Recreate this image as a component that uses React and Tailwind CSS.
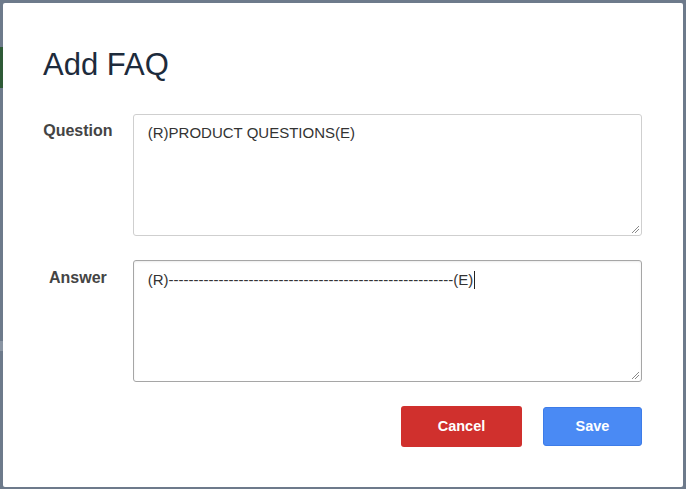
import React from "react";

function Grip() {
  return (
    <svg className="absolute right-[1px] bottom-[1px]" width="9" height="9" viewBox="0 0 9 9">
      <line x1="1" y1="8" x2="8" y2="1" stroke="#8a8a8a" strokeWidth="1" />
      <line x1="4" y1="8" x2="8" y2="4" stroke="#8a8a8a" strokeWidth="1" />
    </svg>
  );
}

export default function App() {
  const dashes = "-".repeat(57);
  return (
    <div
      className="w-[686px] h-[489px] bg-[#6d7a8b] relative overflow-hidden"
      style={{ fontFamily: '"Liberation Sans", Arial, sans-serif' }}
    >
      <div className="absolute left-0 top-[47px] w-[3px] h-[41px] bg-[#2e5a37]" />
      <div className="absolute left-0 top-[341px] w-[3px] h-[10px] bg-[#8a95a3]" />
      <div className="ml-[3px] mt-[3px] w-[680px] h-[484px] bg-white rounded-[2px] pl-[40px] pr-[41px] pt-[44px] flex flex-col">
        <h1 className="text-[31px] leading-[36px] text-[#1d2b3c] font-normal">Add FAQ</h1>
        <div className="mt-[31px] flex items-start">
          <div className="w-[70px] text-center text-[16px] font-bold text-[#444] pt-[8px] leading-[18px]">Question</div>
          <div className="ml-[20px] relative w-[511px] h-[122px] border border-[#cfcfcf] rounded-[3px] pl-[14px] pt-[8px] text-[15px] leading-[20px] text-[#333]">
            (R)PRODUCT QUESTIONS(E)
            <Grip />
          </div>
        </div>
        <div className="mt-[24px] flex items-start">
          <div className="w-[70px] text-center text-[16px] font-bold text-[#444] pt-[9px] leading-[18px]">Answer</div>
          <div className="ml-[20px] relative w-[511px] h-[122px] border border-[#a6a6a6] rounded-[3px] pl-[14px] pt-[9px] text-[15px] leading-[20px] text-[#333] shadow-[inset_0_1px_2px_rgba(0,0,0,0.08)]">
            <span>(R){dashes}(E)</span>
            <span className="inline-block w-[1px] h-[18px] bg-[#222] align-[-4px] ml-[1px]" />
            <Grip />
          </div>
        </div>
        <div className="mt-[24px] flex justify-end items-center">
          <button className="w-[121px] h-[41px] bg-[#d0302d] rounded-[3px] text-white text-[14.5px] font-bold">Cancel</button>
          <button className="ml-[21px] w-[99px] h-[39px] bg-[#4a8af4] border border-[#3d7ce8] rounded-[3px] text-white text-[14.5px] font-bold">Save</button>
        </div>
      </div>
    </div>
  );
}
